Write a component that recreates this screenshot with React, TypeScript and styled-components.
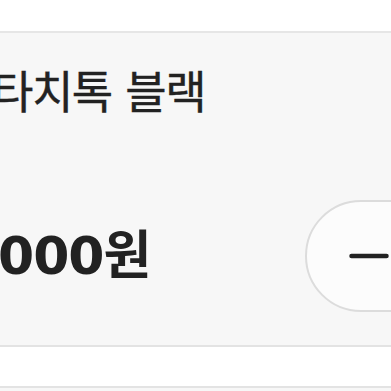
import * as React from 'react';
import styled, { createGlobalStyle } from 'styled-components';

const GlobalStyle = createGlobalStyle`
    html, body {
        margin: 0;
        padding: 0;
        background: #ffffff;
        overflow: hidden;
    }
    body {
        font-family: 'Noto Sans CJK KR', 'Noto Sans', sans-serif;
        color: #222222;
    }
`;

const Page = styled.div`
    display: flex;
    flex-direction: column;
    width: 391px;
    height: 391px;
    overflow: hidden;
`;

const TopStrip = styled.div`
    height: 31px;
    background: #ffffff;
    border-bottom: 2px solid #e6e6e6;
`;

const Panel = styled.div`
    display: flex;
    flex-direction: column;
    background: #f7f7f7;
    padding: 34px 0 33px 0;
    border-bottom: 2px solid #e3e3e3;
    overflow: hidden;
`;

const Title = styled.h2`
    margin: 0 0 0 -8px;
    font-size: 45px;
    line-height: 1;
    font-weight: 400;
    letter-spacing: -1.5px;
    word-spacing: 5px;
    color: #222222;
    white-space: nowrap;
    -webkit-text-stroke: 0.4px #222222;
`;

const PriceRow = styled.div`
    display: flex;
    align-items: center;
    justify-content: space-between;
    margin-top: 88px;
`;

const Price = styled.div`
    margin: -4px 0 0 -2px;
    font-family: 'DejaVu Sans', 'Noto Sans CJK KR', sans-serif;
    font-size: 52px;
    line-height: 1;
    font-weight: 700;
    letter-spacing: -1px;
    color: #222222;
    white-space: nowrap;

    span {
        font-family: 'Noto Sans CJK KR', sans-serif;
    }
`;

const Stepper = styled.div`
    display: flex;
    align-items: center;
    box-sizing: border-box;
    width: 160px;
    height: 112px;
    margin-right: -74px;
    padding-left: 42px;
    background: #fcfcfc;
    border: 2px solid #dcdcdc;
    border-radius: 56px;
    flex-shrink: 0;
`;

const StepButton = styled.button`
    display: flex;
    align-items: center;
    justify-content: center;
    padding: 0;
    border: 0;
    background: transparent;
    cursor: pointer;
`;

const BottomStrip = styled.div`
    height: 39px;
    background: #ffffff;
    border-bottom: 2px solid #e3e3e3;
`;

const Rest = styled.div`
    flex: 1;
    background: #f7f7f7;
`;

const MinusIcon = () => (
    <svg width="40" height="8" viewBox="0 0 40 8">
        <line x1="2.5" y1="4" x2="37.5" y2="4" stroke="#222222" strokeWidth="4.5" strokeLinecap="round" />
    </svg>
);

export default function App() {
    const [qty, setQty] = React.useState(1);

    return (
        <Page>
            <GlobalStyle />
            <TopStrip />
            <Panel>
                <Title>타치톡 블랙</Title>
                <PriceRow>
                    <Price>000<span>원</span></Price>
                    <Stepper>
                        <StepButton aria-label={`수량 ${qty}`} onClick={() => setQty(Math.max(1, qty - 1))}>
                            <MinusIcon />
                        </StepButton>
                    </Stepper>
                </PriceRow>
            </Panel>
            <BottomStrip />
            <Rest />
        </Page>
    );
}
